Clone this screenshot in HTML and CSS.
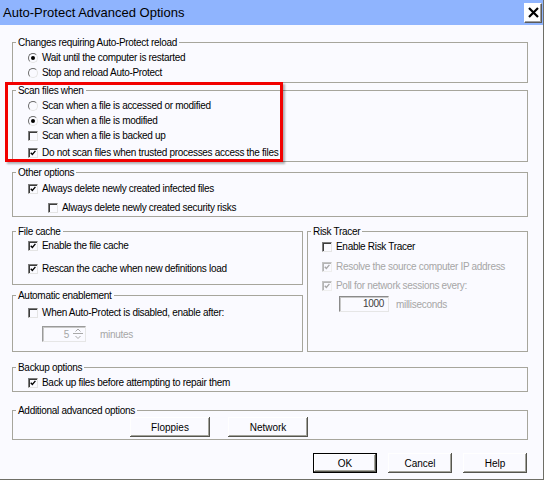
FILE: index.html
```html
<!DOCTYPE html>
<html>
<head>
<meta charset="utf-8">
<title>Auto-Protect Advanced Options</title>
<link rel="stylesheet" href="styles.css">
</head>
<body>
<div class="window">
  <div class="titlebar">
    <span class="title">Auto-Protect Advanced Options</span>
    <span class="close"><svg width="11" height="11" viewBox="0 0 11 11"><path d="M1 1 L10 10 M10 1 L1 10" stroke="#000" stroke-width="2.2" fill="none"/></svg></span>
  </div>
  <div class="content">
    <fieldset class="group g1">
      <legend>Changes requiring Auto-Protect reload</legend>
      <div class="opt"><span class="radio on"></span><span>Wait until the computer is restarted</span></div>
      <div class="opt"><span class="radio"></span><span>Stop and reload Auto-Protect</span></div>
    </fieldset>

    <div class="hl-wrap">
      <fieldset class="group g2">
        <legend>Scan files when</legend>
        <div class="opt"><span class="radio"></span><span>Scan when a file is accessed or modified</span></div>
        <div class="opt"><span class="radio on"></span><span>Scan when a file is modified</span></div>
        <div class="opt"><span class="check"></span><span>Scan when a file is backed up</span></div>
        <div class="opt last"><span class="check on"><svg width="10" height="10" viewBox="0 0 10 10"><path d="M2.2 4.6 L4.2 6.8 L8 2.4" stroke="#000" stroke-width="1.7" fill="none"/></svg></span><span>Do not scan files when trusted processes access the files</span></div>
      </fieldset>
      <div class="highlight"></div>
    </div>

    <fieldset class="group g3">
      <legend>Other options</legend>
      <div class="opt"><span class="check on"><svg width="10" height="10" viewBox="0 0 10 10"><path d="M2.2 4.6 L4.2 6.8 L8 2.4" stroke="#000" stroke-width="1.7" fill="none"/></svg></span><span>Always delete newly created infected files</span></div>
      <div class="opt sub"><span class="check"></span><span>Always delete newly created security risks</span></div>
    </fieldset>

    <div class="cols">
      <div class="col-left">
        <fieldset class="group g-cache">
          <legend>File cache</legend>
          <div class="opt"><span class="check on"><svg width="10" height="10" viewBox="0 0 10 10"><path d="M2.2 4.6 L4.2 6.8 L8 2.4" stroke="#000" stroke-width="1.7" fill="none"/></svg></span><span>Enable the file cache</span></div>
          <div class="opt rescan"><span class="check on"><svg width="10" height="10" viewBox="0 0 10 10"><path d="M2.2 4.6 L4.2 6.8 L8 2.4" stroke="#000" stroke-width="1.7" fill="none"/></svg></span><span>Rescan the cache when new definitions load</span></div>
        </fieldset>
        <fieldset class="group g-auto">
          <legend>Automatic enablement</legend>
          <div class="opt"><span class="check"></span><span>When Auto-Protect is disabled, enable after:</span></div>
          <div class="spin-row">
            <span class="spin"><span class="spin-val">5</span><span class="spin-btns"><svg width="12" height="14" viewBox="0 0 12 14"><path d="M1 6.5 H11 M3.5 4.5 L6 2 L8.5 4.5 M3.5 9 L6 11.5 L8.5 9" stroke="#a8a8a8" stroke-width="1" fill="none"/></svg></span></span>
            <span class="dim">minutes</span>
          </div>
        </fieldset>
      </div>
      <fieldset class="group g-risk">
        <legend>Risk Tracer</legend>
        <div class="opt r1"><span class="check"></span><span>Enable Risk Tracer</span></div>
        <div class="opt r2 dim"><span class="check on disabled"><svg width="10" height="10" viewBox="0 0 10 10"><path d="M2.2 4.6 L4.2 6.8 L8 2.4" stroke="#a8a8a8" stroke-width="1.7" fill="none"/></svg></span><span>Resolve the source computer IP address</span></div>
        <div class="opt r3 dim"><span class="check on disabled"><svg width="10" height="10" viewBox="0 0 10 10"><path d="M2.2 4.6 L4.2 6.8 L8 2.4" stroke="#a8a8a8" stroke-width="1.7" fill="none"/></svg></span><span>Poll for network sessions every:</span></div>
        <div class="ms-row">
          <span class="num">1000</span>
          <span class="dim">milliseconds</span>
        </div>
      </fieldset>
    </div>

    <fieldset class="group g-backup">
      <legend>Backup options</legend>
      <div class="opt"><span class="check on"><svg width="10" height="10" viewBox="0 0 10 10"><path d="M2.2 4.6 L4.2 6.8 L8 2.4" stroke="#000" stroke-width="1.7" fill="none"/></svg></span><span>Back up files before attempting to repair them</span></div>
    </fieldset>

    <fieldset class="group g-adv">
      <legend>Additional advanced options</legend>
      <div class="adv-btns">
        <button class="btn wide">Floppies</button>
        <button class="btn wide">Network</button>
      </div>
    </fieldset>

    <div class="footer">
      <button class="btn default">OK</button>
      <button class="btn">Cancel</button>
      <button class="btn">Help</button>
    </div>
  </div>
</div>
</body>
</html>
```

FILE: styles.css
```css
* { box-sizing: border-box; }
html, body { margin: 0; padding: 0; background: #ffffff; }
body {
  font-family: "Liberation Sans", Arial, sans-serif;
  font-size: 10px;
  letter-spacing: -0.3px;
  color: #000;
}
.window {
  width: 544px;
  height: 480px;
  background: #fafaff;
  border-right: 1px solid #6e6e66;
  border-bottom: 1px solid #6e6e66;
  display: flex;
  flex-direction: column;
}
.titlebar {
  height: 25px;
  flex: none;
  background: #8fb4fe;
  display: flex;
  align-items: center;
  justify-content: space-between;
  padding: 0 1px 0 3px;
}
.title { font-size: 13px; letter-spacing: 0; color: #000; }
.close {
  width: 18px;
  height: 20px;
  background: #fff;
  border: 1px solid;
  border-color: #ffffff #5a5a5a #5a5a5a #ffffff;
  box-shadow: inset -1px -1px #a0a0a0;
  display: flex;
  align-items: center;
  justify-content: center;
}
.content {
  padding: 11px 15px 0 12px;
  display: flex;
  flex-direction: column;
}
.group {
  margin: 0;
  padding: 0;
  border: 1px solid #a6a59c;
  min-width: 0;
}
legend {
  padding: 0 2px;
  margin-left: 3px;
  line-height: 13px;
  height: 13px;
}
.opt {
  height: 15px;
  display: flex;
  align-items: center;
  gap: 4px;
  padding-left: 15px;
  white-space: nowrap;
}
.check {
  width: 10px;
  height: 10px;
  flex: none;
  border: 1px solid;
  border-color: #7c7c7c #e4e4e4 #e4e4e4 #7c7c7c;
  box-shadow: inset 1px 1px #3c3c3c;
  background: #fafaff;
  display: flex;
  align-items: center;
  justify-content: center;
}
.check svg { display: block; }
.check.disabled { box-shadow: inset 1px 1px #b4b4b4; border-color: #c4c4c4 #eeeeee #eeeeee #c4c4c4; }
.radio {
  width: 10px;
  height: 10px;
  flex: none;
  border-radius: 50%;
  border: 1px solid;
  border-color: #6a6a6a #e4e4e4 #e4e4e4 #6a6a6a;
  position: relative;
  background: #fafaff;
}
.radio.on::after {
  content: "";
  position: absolute;
  left: 2px;
  top: 2px;
  width: 4px;
  height: 4px;
  border-radius: 50%;
  background: #000;
}
.dim { color: #a6a6a6; }

.g1 { padding: 1px 0 2px; }
.hl-wrap { margin-top: 1px; position: relative; }
.g2 { padding: 1px 0 1px; }
.g2 .last { margin-top: 2px; }
.highlight {
  position: absolute;
  left: -7px;
  top: -2px;
  width: 278px;
  height: 80px;
  border: 3px solid #f20000;
  box-shadow: 2px 2px 2px rgba(0,0,0,0.3);
  pointer-events: none;
}
.g3 { margin-top: 4px; padding: 2px 0 1px; }
.g3 .sub { margin-top: 4px; padding-left: 35px; }

.cols {
  margin-top: 8px;
  display: flex;
  gap: 4px;
}
.col-left {
  width: 291px;
  display: flex;
  flex-direction: column;
}
.g-cache { padding: 0 0 8px; }
.g-cache .rescan { margin-top: 8px; }
.g-auto { margin-top: 4px; padding: 3px 0 9px; }
.spin-row {
  margin-top: 6px;
  height: 16px;
  display: flex;
  align-items: center;
  padding-left: 29px;
  gap: 14px;
}
.spin {
  width: 44px;
  height: 16px;
  border: 1px solid;
  border-color: #9a9a9a #e6e6e6 #e6e6e6 #9a9a9a;
  box-shadow: inset 1px 1px #c8c8c8;
  display: flex;
  align-items: center;
  justify-content: flex-end;
  color: #a6a6a6;
}
.spin-val { margin-right: 3px; }
.spin-btns { display: flex; align-items: center; margin-right: 1px; }
.spin-btns svg { display: block; }

.g-risk { width: 221px; padding: 1px 0 0; }
.g-risk .opt { padding-left: 14px; }
.g-risk .r2 { margin-top: 5px; }
.g-risk .r3 { margin-top: 4px; }
.ms-row {
  margin-top: 3px;
  height: 16px;
  display: flex;
  align-items: center;
  padding-left: 31px;
  gap: 7px;
}
.num {
  width: 50px;
  height: 16px;
  border: 1px solid;
  border-color: #8a8a8a #e6e6e6 #e6e6e6 #8a8a8a;
  box-shadow: inset 1px 1px #c8c8c8;
  text-align: right;
  padding-right: 4px;
  line-height: 14px;
  color: #404040;
}

.g-backup { margin-top: 9px; padding: 1px 0 1px; }
.g-adv { margin-top: 12px; padding: 0 0 2px; }
.adv-btns {
  display: flex;
  gap: 18px;
  padding-left: 117px;
}
.btn {
  width: 64px;
  height: 20px;
  padding: 0;
  margin: 0;
  border: none;
  background: #fafaff;
  font: inherit;
  color: #000;
  box-shadow: inset -1px -1px #55554f, inset 1px 1px #ffffff, inset -2px -2px #a4a49c;
}
.btn.wide { width: 80px; }
.btn.default {
  border: 1px solid #000;
  box-shadow: inset -1px -1px #55554f, inset 1px 1px #ffffff, inset -2px -2px #a4a49c;
}
.footer {
  margin-top: 13px;
  display: flex;
  justify-content: flex-end;
  gap: 11px;
  padding-right: 1px;
}
```
